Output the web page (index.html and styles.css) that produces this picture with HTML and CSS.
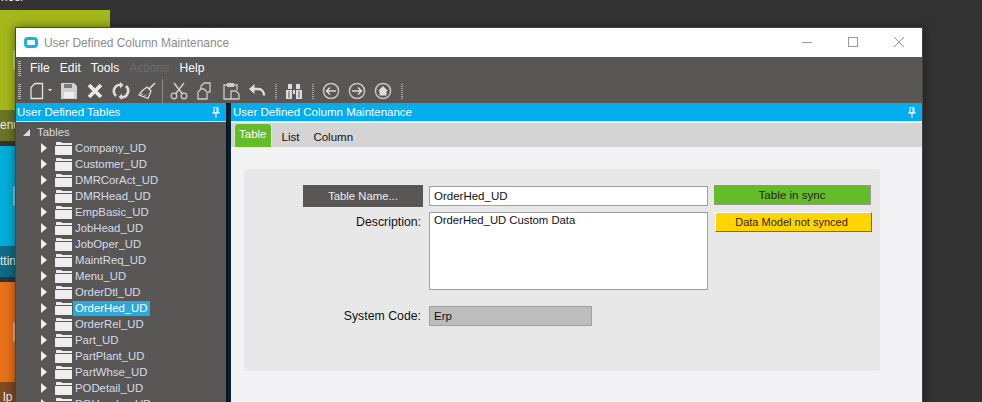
FILE: index.html
```html
<!DOCTYPE html>
<html lang="en">
  <head>
    <meta charset="UTF-8" />
    <title>User Defined Column Maintenance</title>
    <link rel="stylesheet" href="styles.css">
  </head>
  <body>
    <div class="desktop">
      <div class="top-text">ncer</div>
      <div class="tile tile-green"><div class="tile-body"></div><div class="tile-label">enu</div></div>
      <div class="tile tile-blue"><div class="tile-body"></div><div class="tile-label">ttin</div></div>
      <div class="tile tile-orange"><div class="tile-body"></div><div class="tile-label">lp</div></div>

      <div class="window">
        <div class="titlebar">
          <svg class="app-icon" width="14" height="11" viewBox="0 0 14 11"><rect x="1.5" y="1.5" width="11" height="8" rx="2.5" fill="#fff" stroke="#19b2e6" stroke-width="3"/></svg>
          <span class="title">User Defined Column Maintenance</span>
          <div class="win-buttons">
            <svg width="12" height="12" viewBox="0 0 12 12"><path d="M1 6.500h10" stroke="#999" fill="none"/></svg>
            <svg width="12" height="12" viewBox="0 0 12 12"><rect x="1.500" y="1.500" width="9" height="9" stroke="#999" fill="none"/></svg>
            <svg width="12" height="12" viewBox="0 0 12 12"><path d="M1 1l10 10M11 1L1 11" stroke="#999" fill="none"/></svg>
          </div>
        </div>

        <div class="menubar">
          <span class="grip"></span>
          <span class="menu-item">File</span>
          <span class="menu-item">Edit</span>
          <span class="menu-item">Tools</span>
          <span class="menu-item disabled">Actions</span>
          <span class="menu-item">Help</span>
        </div>

        <div class="toolbar">
          <span class="grip"></span>
          <svg class="tool tool-new" width="23" height="18" viewBox="0 0 23 18"><path d="M2 5.500L6 1.500h7.500v15H2z" fill="none" stroke="#e4e4e4" stroke-width="1.300"/><path d="M19 7h4l-2 2.500z" fill="#e4e4e4"/></svg>
          <svg class="tool" width="18" height="18" viewBox="0 0 18 18"><path d="M1 1h13l3 3v13H1z" fill="#d2d2d2"/><path d="M4 2h8v4H4z" fill="#7d7b79"/><path d="M4 10h10v6H4z" fill="#eee"/></svg>
          <svg class="tool" width="18" height="18" viewBox="0 0 18 18"><path d="M3 3l12 12M15 3L3 15" stroke="#e8e8e8" stroke-width="3.800" fill="none"/></svg>
          <svg class="tool" width="18" height="18" viewBox="0 0 18 18"><path d="M4 14A6.500 6.500 0 0 1 8 2.700M14 4a6.500 6.500 0 0 1-4 11.300" stroke="#ddd" stroke-width="2.600" fill="none"/><path d="M8 0v6.500L11.500 3zM10 11.500V18L6.500 15z" fill="#ddd"/></svg>
          <svg class="tool" width="18" height="18" viewBox="0 0 18 18"><path d="M17 1l-6 6" stroke="#ddd" stroke-width="1.600"/><path d="M9 5l4 4-3 7.500L1 13l3-4z" fill="none" stroke="#ddd" stroke-width="1.300"/><path d="M5 12l-2.500 1.500M8 12.500l-2.500 2.500" stroke="#ddd"/></svg>
          <span class="sep"></span>
          <svg class="tool" width="18" height="18" viewBox="0 0 18 18"><path d="M4 1l8.500 11M14 1L5.500 12" stroke="#ccc" stroke-width="1.500" fill="none"/><circle cx="4" cy="14" r="2.800" fill="none" stroke="#ccc" stroke-width="1.300"/><circle cx="14" cy="14" r="2.800" fill="none" stroke="#ccc" stroke-width="1.300"/></svg>
          <svg class="tool" width="18" height="18" viewBox="0 0 18 18"><path d="M8 1h6v9h-2M8 1L5 4v3" fill="none" stroke="#ccc" stroke-width="1.300"/><path d="M5 7h3l3 3v7H2v-7z" fill="none" stroke="#ccc" stroke-width="1.300"/></svg>
          <svg class="tool" width="18" height="18" viewBox="0 0 18 18"><path d="M5 3H2v14h7M12 3h3v5" fill="none" stroke="#ccc" stroke-width="1.300"/><rect x="5" y="1" width="7" height="4" fill="#ccc"/><path d="M9 9h5l3 3v5H9z" fill="none" stroke="#ccc" stroke-width="1.300"/></svg>
          <svg class="tool" width="18" height="18" viewBox="0 0 18 18"><path d="M5 7h5c4 0 6 3 6 6.500" stroke="#ddd" stroke-width="2.400" fill="none"/><path d="M6.500 2v10L1 7z" fill="#ddd"/></svg>
          <span class="grip-small"></span>
          <svg class="tool" width="18" height="18" viewBox="0 0 18 18"><path d="M3 2h4v5H3zM11 2h4v5h-4z" fill="#ddd"/><path d="M1 8h6v9H1zM11 8h6v9h-6zM8 8h2v4H8z" fill="#ddd"/><path d="M4 9v7M14 9v7" stroke="#595755"/></svg>
          <span class="grip-small"></span>
          <svg class="tool" width="18" height="18" viewBox="0 0 18 18"><circle cx="9" cy="9" r="7.600" fill="none" stroke="#c4c4c4" stroke-width="1.500"/><path d="M14 9H5M8 5.500L4.500 9 8 12.500" fill="none" stroke="#ddd" stroke-width="1.500"/></svg>
          <svg class="tool" width="18" height="18" viewBox="0 0 18 18"><circle cx="9" cy="9" r="7.600" fill="none" stroke="#c4c4c4" stroke-width="1.500"/><path d="M4 9h9M10 5.500L13.500 9 10 12.500" fill="none" stroke="#ddd" stroke-width="1.500"/></svg>
          <svg class="tool" width="18" height="18" viewBox="0 0 18 18"><circle cx="9" cy="9" r="7.600" fill="none" stroke="#c4c4c4" stroke-width="1.500"/><path d="M9 4L4 9h1.500v4.500h7V9H14z" fill="#ddd"/></svg>
          <span class="grip-small"></span>
        </div>

        <div class="panes">
          <div class="left-pane">
            <div class="pane-header">
              <span>User Defined Tables</span>
              <svg class="pin" width="9" height="11" viewBox="0 0 9 11"><path d="M2 .5h4v5H2zM0 6h8M4 6v5M5 1v4" stroke="#fff" fill="none"/></svg>
            </div>
            <div class="tree">
              <div class="tree-root"><span class="root-arrow"></span>Tables</div>
              <ul class="tree-list" id="tree"></ul>
            </div>
          </div>
          <div class="splitter"></div>
          <div class="right-pane">
            <div class="pane-header">
              <span>User Defined Column Maintenance</span>
              <svg class="pin" width="9" height="11" viewBox="0 0 9 11"><path d="M2 .5h4v5H2zM0 6h8M4 6v5M5 1v4" stroke="#fff" fill="none"/></svg>
            </div>
            <div class="tabs">
              <span class="tab active">Table</span>
              <span class="tab">List</span>
              <span class="tab">Column</span>
            </div>
            <div class="content">
              <div class="panel">
                <div class="form-row">
                  <button class="name-btn">Table Name...</button>
                  <input class="field name-field" type="text" value="OrderHed_UD" />
                  <div class="status status-green">Table in sync</div>
                </div>
                <div class="form-row desc-row">
                  <label class="label">Description:</label>
                  <textarea class="field area">OrderHed_UD Custom Data</textarea>
                  <div class="status status-yellow">Data Model not synced</div>
                </div>
                <div class="form-row code-row">
                  <label class="label">System Code:</label>
                  <div class="field readonly">Erp</div>
                </div>
              </div>
            </div>
          </div>
        </div>
      </div>
    </div>

    <script>
      const tables = ["Company_UD", "Customer_UD", "DMRCorAct_UD", "DMRHead_UD", "EmpBasic_UD", "JobHead_UD", "JobOper_UD", "MaintReq_UD", "Menu_UD", "OrderDtl_UD", "OrderHed_UD", "OrderRel_UD", "Part_UD", "PartPlant_UD", "PartWhse_UD", "PODetail_UD", "POHeader_UD"];
      const folder = '<svg class="folder" width="17" height="13" viewBox="0 0 17 13"><path d="M1 0h6v1h10v2H1zM0 4h17v9H0z" fill="#eee"/></svg>';
      document.getElementById("tree").innerHTML = tables
        .map((name) => `<li class="tree-item"><span class="arrow"></span>${folder}<span class="tree-name${name === "OrderHed_UD" ? " selected" : ""}">${name}</span></li>`)
        .join("");
    </script>
  </body>
</html>
```

FILE: styles.css
```css
html,
body {
  margin: 0;
  height: 100%;
  overflow: hidden;
}
body {
  font-family: "Liberation Sans", Arial, sans-serif;
  font-size: 12px;
  background-color: #333333;
}
.desktop {
  position: relative;
  width: 982px;
  height: 402px;
  overflow: hidden;
}
.top-text {
  position: absolute;
  left: 1px;
  top: -10px;
  color: #eee;
}
.tile {
  position: absolute;
  left: 0;
  width: 110px;
  color: #eee;
  overflow: hidden;
}
.tile-body {
  height: 100px;
  position: relative;
}
/* only the edge of the tile's round icon shows beside the window */
.tile-body::before {
  content: "";
  position: absolute;
  left: 13px;
  top: 40px;
  width: 2px;
  height: 20px;
  background: rgba(255, 255, 255, 0.45);
  border-radius: 2px 0 0 2px;
}
.tile-label {
  height: 31px;
  line-height: 31px;
  font-size: 12px;
}
.tile-green {
  top: 10px;
  background: #a5b81a;
}
.tile-green .tile-label {
  background: #6a7426;
}
.tile-blue {
  top: 146px;
  background: #00aed9;
}
.tile-blue .tile-label {
  background: #0e6a85;
}
.tile-orange {
  top: 282px;
  background: #e8711a;
}
.tile-orange .tile-label {
  background: #804a22;
  padding-left: 3px;
}
.window {
  position: absolute;
  left: 15px;
  top: 27px;
  width: 906px;
  height: 380px;
  border: 1px solid #444;
  border-bottom: 0;
  background: #f3f3f5;
  box-shadow: 0 0 10px rgba(0, 0, 0, 0.45);
}
.titlebar {
  display: flex;
  align-items: center;
  height: 29px;
  background: #fff;
  padding-left: 8px;
}
.app-icon {
  margin: 0 6px 1px 0;
}
.title {
  color: #8c8c8c;
  font-size: 11.9px;
}
.win-buttons {
  margin-left: auto;
  display: flex;
  gap: 34px;
  padding: 0 17px 2px 0;
}
.menubar {
  display: flex;
  align-items: center;
  height: 22px;
  background: #595755;
  padding-left: 2px;
}
.grip {
  width: 3px;
  height: 15px;
  flex: none;
  background: repeating-linear-gradient(#b5b5b5 0 1px, transparent 1px 2px);
}
.menubar .grip {
  margin-right: 9px;
}
.menu-item {
  color: #fff;
  margin-right: 10px;
  letter-spacing: 0.1px;
}
.menu-item.disabled {
  color: #6f6d6b;
}
.toolbar {
  display: flex;
  align-items: center;
  height: 24px;
  background: #595755;
  padding-left: 2px;
}
.toolbar .grip {
  margin-right: 4px;
}
.tool {
  margin: 0 4px;
  flex: none;
}
.sep {
  width: 1px;
  height: 24px;
  background: #8d8b89;
  margin: 0 3px 0 2px;
}
.grip-small {
  width: 2px;
  height: 15px;
  margin: 0 4px 0 5px;
  background: repeating-linear-gradient(#a5a5a5 0 1px, transparent 1px 2px);
}
.panes {
  display: flex;
  height: 304px;
}
.left-pane {
  width: 210px;
  flex: none;
  overflow: hidden;
}
.splitter {
  width: 5px;
  flex: none;
  background: linear-gradient(90deg, #0a1218, #04283f);
}
.right-pane {
  flex: 1;
  display: flex;
  flex-direction: column;
}
.pane-header {
  display: flex;
  align-items: center;
  justify-content: space-between;
  height: 18px;
  padding: 0 5px 0 1px;
  background: #00aeef;
  color: #fff;
  font-size: 11.5px;
}
.right-pane .pane-header {
  padding-left: 2px;
}
.tree {
  height: 300px;
  margin-top: 1px;
  background: #595755;
  color: #d5dcec;
  font-size: 11.35px;
}
.tree-root {
  display: flex;
  align-items: center;
  height: 16px;
  padding: 2px 0 0 7px;
  color: #d9d9d9;
}
.root-arrow {
  width: 0;
  height: 0;
  margin-right: 7px;
  border-left: 7px solid transparent;
  border-bottom: 7px solid #ddd;
}
.tree-list {
  list-style: none;
  margin: 0;
  padding: 0;
}
.tree-item {
  display: flex;
  align-items: center;
  height: 16px;
  padding-left: 25px;
}
.arrow {
  width: 0;
  height: 0;
  margin-right: 8px;
  border-top: 5px solid transparent;
  border-bottom: 5px solid transparent;
  border-left: 6px solid #eee;
}
.tree-name {
  margin-left: 1px;
  padding: 0 2px;
  line-height: 15px;
}
.tree-name.selected {
  background: #29a9e0;
  color: #fff;
}
.tabs {
  display: flex;
  align-items: flex-end;
  height: 24px;
  margin-top: 2px;
  background: #d4d4d4;
  padding-left: 3px;
  font-size: 11.5px;
}
.tab {
  padding: 0 7px;
  color: #111;
  line-height: 19px;
}
.tab.active {
  background: #64bc26;
  color: #fff;
  border: 1px solid #d8e8c8;
  border-bottom: 0;
  border-radius: 4px 4px 0 0;
  padding: 0 4px;
  line-height: 21px;
  height: 24px;
  box-sizing: border-box;
  margin-right: 3px;
}
.content {
  flex: 1;
  padding: 22px 42px 0 13px;
  background: #f3f3f5;
}
.panel {
  height: 202px;
  padding: 16px 8px 0 59px;
  background: #e8e8e8;
  border-radius: 4px;
  box-sizing: border-box;
}
.form-row {
  display: flex;
  align-items: flex-start;
}
.name-btn {
  width: 120px;
  height: 22px;
  margin-right: 6px;
  border: 0;
  background: #595755;
  color: #eee;
  font: inherit;
  font-size: 11.3px;
}
.field {
  width: 279px;
  height: 20px;
  border: 1px solid #a0a0a0;
  background: #fff;
  color: #111;
  font: inherit;
  font-size: 11.5px;
  padding: 0 4px;
  margin: 0;
  box-sizing: border-box;
  outline: 0;
  resize: none;
  flex: none;
}
.name-field {
  margin-top: 1px;
}
.status {
  width: 157px;
  height: 20px;
  margin-left: 6px;
  text-align: center;
  line-height: 19px;
  box-sizing: border-box;
}
.status-green {
  background: #64bc26;
  color: #222;
  font-size: 11.6px;
  border-right: 1px solid #999;
  border-bottom: 1px solid #999;
}
.status-yellow {
  background: #ffd500;
  color: #3a1a00;
  font-size: 11px;
  margin-left: 7px;
  padding-right: 4px;
  border-top: 1px solid #fff;
  border-left: 1px solid #fff;
  border-right: 1px solid #666;
  border-bottom: 1px solid #666;
}
.desc-row {
  margin-top: 5px;
}
.label {
  width: 120px;
  margin-right: 6px;
  padding-right: 2px;
  text-align: right;
  color: #111;
  font-size: 12.3px;
  box-sizing: border-box;
  line-height: 20px;
}
.area {
  height: 78px;
  padding: 1px 4px 0;
  line-height: 13px;
  font-size: 11.3px;
}
.code-row {
  margin-top: 16px;
  align-items: center;
}
.readonly {
  width: 163px;
  background: #bdbdbd;
  line-height: 18px;
}
```
